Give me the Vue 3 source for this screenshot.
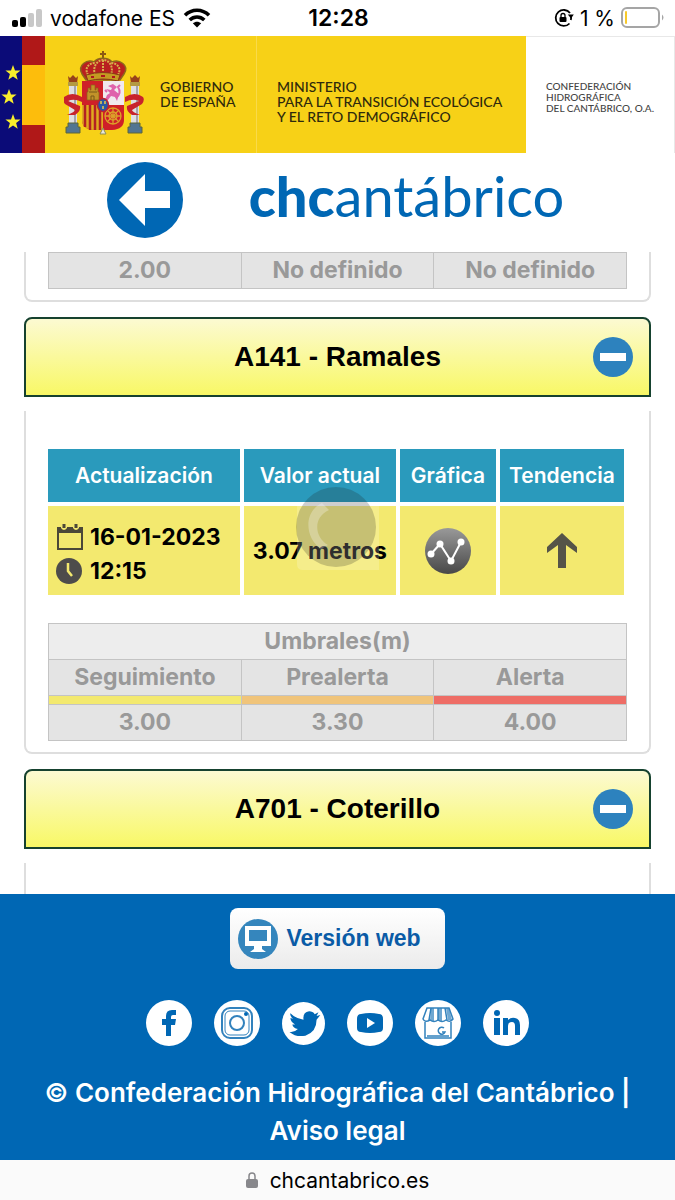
<template>
  <div class="page">
    <div class="status-bar">
      <div class="carrier">
        <svg class="signal" width="30" height="20" viewBox="0 0 30 20">
          <rect x="0" y="12" width="6" height="7" rx="2" fill="#000" />
          <rect x="8" y="9" width="6" height="10" rx="2" fill="#000" />
          <rect x="16" y="5" width="6" height="14" rx="2" fill="#c8c8c8" />
          <rect x="24" y="1" width="6" height="18" rx="2" fill="#c8c8c8" />
        </svg>
        <span>vodafone ES</span>
        <svg width="28" height="20" viewBox="0 0 28 20" fill="none" stroke="#000" stroke-width="3.6">
          <path d="M2 7.2C8.800 .5 19.200 .5 26 7.200" />
          <path d="M6.700 12C11 8 17 8 21.300 12" />
          <path d="M14 19.500L9.800 15.300C12.300 13.200 15.700 13.200 18.200 15.300Z" fill="#000" stroke="none" />
        </svg>
      </div>
      <span class="time">12:28</span>
      <div class="battery">
        <svg width="20" height="20" viewBox="0 0 20 20" fill="none" stroke="#000" stroke-width="1.8">
          <path d="M16 5A8 8 0 1 0 15.500 15.500" />
          <path d="M17 8.500A8 8 0 0 1 16.800 12" />
          <path d="M13.800 6.500h6l-2.800 4z" fill="#000" stroke="none" />
          <rect x="5.500" y="9" width="7" height="5" rx="1" fill="#000" stroke="none" />
          <path d="M7 9V7.500a2 2 0 0 1 4 0V9" stroke-width="1.300" />
        </svg>
        <span>1 %</span>
        <svg width="44" height="22" viewBox="0 0 44 22">
          <rect x="1" y="1" width="37" height="19" rx="5" fill="#fff" stroke="#a5a5a5" stroke-width="2" />
          <rect x="4" y="4" width="2" height="13" rx="1" fill="#f7c92b" />
          <path d="M41 7.500q3 3 0 6z" fill="#a5a5a5" />
        </svg>
      </div>
    </div>

    <div class="gov-banner">
      <svg class="flags" width="45" height="117" viewBox="0 0 45 117">
        <rect width="23" height="117" fill="#0b0b78" />
        <rect x="22" width="23" height="117" fill="#b01818" />
        <rect x="22" y="29" width="23" height="60" fill="#fdbd0c" />
        <g fill="#f8ee2c">
          <path v-for="s in stars" :key="s.y" :transform="`translate(${s.x} ${s.y})`"
            d="M0-8L2-2.500H7.600L3.100 1 4.700 6.800 0 3.400-4.700 6.800-3.100 1-7.600-2.500H-2Z" />
        </g>
      </svg>
      <div class="gov-state">
        <svg width="80" height="86" viewBox="0 0 80 86">
          <!-- corona -->
          <path d="M39 1v9M36 4h6" stroke="#8c5a12" stroke-width="2" />
          <path d="M18 24C13 15 23 9 30 12 34 7 44 7 48 12 55 9 66 15 60 24L56 30H22Z" fill="#b92020" stroke="#8c681b" stroke-width="1.500" />
          <path d="M24 25C20 18 25 13 31 13M31 25C28 16 34 10 39 10 45 10 50 16 47 25M54 25C58 18 53 13 47 13M39 10V26" fill="none" stroke="#d6b04a" stroke-width="2" stroke-dasharray="2 1" />
          <path d="M22 25q17-5 34 0l-2 6q-15-4-30 0z" fill="#c49a22" stroke="#8a3a16" />
          <path d="M27 27h3M37 26h4M48 27h3" stroke="#b1151d" stroke-width="2" />
          <!-- columnas -->
          <g v-for="x in [2, 64]" :key="x" :transform="`translate(${x} 0)`">
            <path d="M2 26l2 2 3-3 3 3 2-2-1 7H3z" fill="#97421b" />
            <rect x="2" y="32" width="10" height="4" fill="#b49a42" />
            <rect x="3" y="36" width="8" height="38" fill="#dfdfe2" />
            <path d="M9 36v38" stroke="#a3a3ac" stroke-width="2" />
            <path d="M2 73h10v4h2v6H0v-6h2z" fill="#527592" stroke="#5c663b" />
          </g>
          <path d="M0 47q8-6 18 0v5q-8-4-14-1l12 5q1 5-5 9H3q8-3 8-5L1 54q-3-4-1-7z" fill="#c8232c" />
          <path d="M79 47q-8-6-18 0v5q8-4 14-1l-12 5q-1 5 5 9h8q-8-3-8-5l10-6q3-4 1-7z" fill="#c8232c" />
          <!-- escudo -->
          <path d="M18 31h42v39q0 9-12 10H30q-12-1-12-10z" fill="#cf2028" />
          <path d="M39 31h21v24H39z" fill="#f0e9ee" />
          <path d="M18 55h21v25h-9q-12-1-12-10z" fill="#e0a920" />
          <path d="M21 55v22M26 55v25M31 55v25M36 55v25" stroke="#b42123" stroke-width="2.500" />
          <path d="M23 50V42h1v-4h2v2h1v-5h4v5h1v-2h2v4h1v8z" fill="#c29329" stroke="#8e631a" stroke-width=".7" />
          <path d="M27 50v-4h3v4M25 42h8" stroke="#795918" fill="none" />
          <path d="M44 36l5-2 4 3-3 3 5 4-2 7-2-4-4-1-3 4h-3l2-5 3-2-4-4 5 1 1-2z" fill="#df62ac" />
          <path d="M52 48q6-5 2-11l2-2M43 42l-2-2" fill="none" stroke="#df62ac" stroke-width="2" />
          <g fill="none" stroke="#dca129" stroke-width="1.300">
            <circle cx="49" cy="66" r="8" />
            <circle cx="49" cy="66" r="4" />
            <path d="M41 66h16M49 58v16M43 60l12 12M55 60L43 72" />
          </g>
          <ellipse cx="39" cy="55" rx="5.500" ry="6.500" fill="#2859a5" stroke="#bd2233" stroke-width="1.500" />
          <path d="M37 51v3M41 51v3M39 56v3" stroke="#b9ad61" stroke-width="2" />
          <path d="M36 84l3-6 3 6z" fill="#e8e8df" stroke="#8b8d57" />
        </svg>
        <p>GOBIERNO<br>DE ESPAÑA</p>
      </div>
      <div class="gov-ministry">
        <p>MINISTERIO<br>PARA LA TRANSICIÓN ECOLÓGICA<br>Y EL RETO DEMOGRÁFICO</p>
      </div>
      <div class="gov-body">
        <p>CONFEDERACIÓN<br>HIDROGRÁFICA<br>DEL CANTÁBRICO, O.A.</p>
      </div>
    </div>

    <header class="header">
      <a href="#" class="back" aria-label="Volver">
        <svg width="76" height="76" viewBox="0 0 76 76">
          <circle cx="38" cy="38" r="38" fill="#0067b4" />
          <path d="M12 38L38 12V29H63V46H38V64Z" fill="#fff" />
        </svg>
      </a>
      <a href="#" class="brand"><b>chc</b>antábrico</a>
    </header>

    <main class="stations">
      <div class="panel panel-first">
        <table class="thresholds">
          <tbody>
            <tr>
              <td>2.00</td>
              <td>No definido</td>
              <td>No definido</td>
            </tr>
          </tbody>
        </table>
      </div>

      <h3 class="station-title">
        <button type="button" @click="toggle('A141')">
          <span>A141 - Ramales</span>
          <svg width="40" height="40" viewBox="0 0 40 40">
            <circle cx="20" cy="20" r="20" fill="#2d82be" />
            <path d="M7 16H33V24H7Z" fill="#fff" />
          </svg>
        </button>
      </h3>
      <div v-show="open.A141" class="panel">
        <table class="readings">
          <thead>
            <tr>
              <th class="col-date">Actualización</th>
              <th class="col-value">Valor actual</th>
              <th class="col-chart">Gráfica</th>
              <th class="col-trend">Tendencia</th>
            </tr>
          </thead>
          <tbody>
            <tr>
              <td class="date">
                <div class="stamp">
                  <svg width="28" height="28" viewBox="0 0 28 28">
                    <path d="M2 5H26V26H2Z" fill="none" stroke="#4b4838" stroke-width="2" />
                    <path d="M1 4H27V10H1Z" fill="#4b4838" />
                    <path d="M5 1h6v4q-3 4-6 0zM17 1h6v4q-3 4-6 0z" fill="#f3e96f" />
                    <path d="M8 1v4M20 1v4" stroke="#4b4838" stroke-width="3" />
                  </svg>
                  <span>16-01-2023</span>
                </div>
                <div class="stamp">
                  <svg width="28" height="28" viewBox="0 0 28 28">
                    <circle cx="13" cy="14" r="13" fill="#4d4c4b" />
                    <path d="M12 6V14L16 19" fill="none" stroke="#f3e96f" stroke-width="2.500" />
                  </svg>
                  <span>12:15</span>
                </div>
              </td>
              <td class="value">3.07 metros</td>
              <td class="icon-cell">
                <a href="#" aria-label="Ver gráfica">
                  <svg width="48" height="48" viewBox="0 0 48 48">
                    <defs>
                      <linearGradient id="ball" x1="0" y1="0" x2="0" y2="1">
                        <stop offset="0" stop-color="#999" />
                        <stop offset="1" stop-color="#484848" />
                      </linearGradient>
                    </defs>
                    <circle cx="24" cy="24" r="23" fill="url(#ball)" />
                    <path d="M7 27L16 17 27 34 37 15" fill="none" stroke="#fff" stroke-width="2" />
                    <g fill="#fff">
                      <circle cx="7" cy="27" r="3.500" />
                      <circle cx="16" cy="17" r="3.500" />
                      <circle cx="27" cy="34" r="3.500" />
                      <circle cx="37" cy="15" r="3.500" />
                    </g>
                  </svg>
                </a>
              </td>
              <td class="icon-cell">
                <svg width="32" height="38" viewBox="0 0 32 38">
                  <path d="M16 1L31 15V21L20 13V36H12V13L1 21V15Z" fill="#555448" />
                </svg>
              </td>
            </tr>
          </tbody>
        </table>

        <table class="thresholds">
          <thead>
            <tr>
              <th colspan="3" class="caption">Umbrales(m)</th>
            </tr>
            <tr>
              <th>Seguimiento</th>
              <th>Prealerta</th>
              <th>Alerta</th>
            </tr>
          </thead>
          <tbody>
            <tr class="levels">
              <td class="yellow"></td>
              <td class="orange"></td>
              <td class="red"></td>
            </tr>
            <tr>
              <td>3.00</td>
              <td>3.30</td>
              <td>4.00</td>
            </tr>
          </tbody>
        </table>
      </div>

      <h3 class="station-title">
        <button type="button" @click="toggle('A701')">
          <span>A701 - Coterillo</span>
          <svg width="40" height="40" viewBox="0 0 40 40">
            <circle cx="20" cy="20" r="20" fill="#2d82be" />
            <path d="M7 16H33V24H7Z" fill="#fff" />
          </svg>
        </button>
      </h3>
      <div v-show="open.A701" class="panel panel-last"></div>

      <!-- cargando -->
      <svg class="loader" width="84" height="84" viewBox="0 0 84 84">
        <path d="M1 16H83V84H7Q1 84 1 78Z" fill="#fff" opacity=".2" />
        <circle cx="40" cy="41" r="40" fill="#222" opacity=".22" />
        <path d="M26 17C8 25 8 51 25 63L32 59C18 51 17 31 33 24Z" fill="#fff" opacity=".28" />
      </svg>
    </main>

    <footer class="footer">
      <a href="#" class="web-version">
        <svg width="40" height="40" viewBox="0 0 40 40">
          <circle cx="20" cy="20" r="20" fill="#3586bd" />
          <path d="M7 7H33V27H24V30L28 33H12L16 30V27H7Z" fill="#fff" />
          <path d="M11 11H29V22H11Z" fill="#3586bd" />
        </svg>
        <span>Versión web</span>
      </a>

      <nav class="social">
        <a href="#" aria-label="Facebook">
          <svg viewBox="0 0 46 46">
            <circle cx="23" cy="23" r="23" fill="#fff" />
            <path d="M20 36V25H16V19H20V16Q20 10 26 10H30V15H27Q25 15 25 17V19H30L29 25H25V36Z" fill="#0067b4" />
          </svg>
        </a>
        <a href="#" aria-label="Instagram">
          <svg viewBox="0 0 46 46">
            <circle cx="23" cy="23" r="23" fill="#fff" />
            <g fill="none" stroke="#3282bd" stroke-width="2">
              <rect x="8" y="8" width="30" height="30" rx="8" />
              <rect x="11" y="11" width="24" height="24" rx="5" stroke-width="1" />
              <circle cx="23" cy="23" r="7" />
            </g>
            <circle cx="32" cy="14" r="2" fill="#0067b4" />
          </svg>
        </a>
        <a href="#" aria-label="Twitter" class="small">
          <svg viewBox="0 0 46 46">
            <circle cx="23" cy="23" r="23" fill="#fff" />
            <path d="M9 12Q15 18 23 19Q22 11 29 10Q33 10 35 13L39 11L37 15L41 14L37 19Q37 32 25 36Q15 38 8 32Q13 33 17 29Q12 28 11 24H14Q9 21 9 17L12 18Q8 15 9 12Z" fill="#0067b4" />
          </svg>
        </a>
        <a href="#" aria-label="YouTube">
          <svg viewBox="0 0 46 46">
            <circle cx="23" cy="23" r="23" fill="#fff" />
            <path d="M14 14Q23 12 32 14 36 14 36 19V28Q36 32 32 32 23 34 14 32 10 32 10 28V19Q10 14 14 14Z" fill="#0067b4" />
            <path d="M20 18L28 23 20 28Z" fill="#fff" />
          </svg>
        </a>
        <a href="#" aria-label="Google My Business">
          <svg viewBox="0 0 46 46">
            <circle cx="23" cy="23" r="23" fill="#fff" />
            <g fill="none" stroke="#3282bd" stroke-width="1.500">
              <path d="M12 8H34L38 19Q35 23 31 20 27 23 23 20 19 23 15 20 10 23 8 19Z" />
              <path d="M16 8L14 20M23 8V20M30 8L32 20M10 22V38H36V22M12 36H34" />
              <path d="M29 28a3.500 3.500 0 1 0 1 4h-3" />
            </g>
            <path d="M16 8H19V21H15ZM23 8H27V21H23ZM31 8H34L37 20H33Z" fill="#3282bd" opacity=".7" />
          </svg>
        </a>
        <a href="#" aria-label="LinkedIn">
          <svg viewBox="0 0 46 46">
            <circle cx="23" cy="23" r="23" fill="#fff" />
            <circle cx="14" cy="13" r="3" fill="#0067b4" />
            <path d="M11 18H17V35H11ZM20 18H25V20Q28 17 32 18 37 19 37 25V35H32V26Q32 22 29 22 25 22 25 26V35H20Z" fill="#0067b4" />
          </svg>
        </a>
      </nav>

      <p class="legal">© Confederación Hidrográfica del Cantábrico | <a href="#">Aviso legal</a></p>
    </footer>

    <div class="url-bar">
      <svg width="12" height="18" viewBox="0 0 12 18">
        <rect x="0" y="8" width="12" height="9" rx="2" fill="#87878b" />
        <path d="M3 9V5a3 3 0 0 1 6 0v4" fill="none" stroke="#87878b" stroke-width="1.500" />
      </svg>
      <span>chcantabrico.es</span>
    </div>
  </div>
</template>

<script setup>
import { reactive } from 'vue'

const stars = [
  { x: 13, y: 37 },
  { x: 9, y: 61 },
  { x: 13, y: 86 }
]

const open = reactive({ A141: true, A701: true })

const toggle = (id) => {
  open[id] = !open[id]
}
</script>

<style>
body {
  margin: 0;
  background: #fff;
}
</style>

<style scoped>
.page {
  display: flex;
  flex-direction: column;
  min-height: 100vh;
  font-family: Inter, "Liberation Sans", sans-serif;
  color: #000;
}

.page *, .page {
  box-sizing: border-box;
}

svg {
  display: block;
  flex: none;
}

p, h3 {
  margin: 0;
}

a {
  color: inherit;
  text-decoration: none;
}

/* barra de estado */
.status-bar {
  display: grid;
  grid-template-columns: 1fr auto 1fr;
  align-items: center;
  height: 36px;
  padding: 0 10px 0 12px;
  font-size: 21px;
}

.carrier, .battery {
  display: flex;
  align-items: center;
  gap: 8px;
}

.battery {
  justify-content: flex-end;
  gap: 6px;
}

.time {
  font-size: 23px;
  font-weight: 600;
}

/* banda institucional */
.gov-banner {
  display: grid;
  grid-template-columns: 45px 212fr 269fr 149fr;
  height: 117px;
  font-family: Lato, sans-serif;
  font-size: 14px;
  font-weight: 500;
  line-height: 15px;
  color: #2f2a0c;
  white-space: nowrap;
}

.gov-state, .gov-ministry {
  display: flex;
  align-items: flex-start;
  background: #f7d117;
}

.gov-state {
  gap: 16px;
  padding: 14px 0 0 19px;
  border-right: 1px solid #f9da4a;
}

.gov-state p {
  padding-top: 29px;
}

.gov-ministry {
  padding: 43px 0 0 20px;
}

.gov-body {
  padding: 44px 0 0 20px;
  border: 1px solid #e8e8e8;
  border-width: 1px 1px 0 0;
  font-size: 10px;
  line-height: 11px;
  color: #444;
}

.header {
  display: flex;
  align-items: center;
  justify-content: center;
  gap: 66px;
  height: 99px;
  padding: 0 4px 6px 0;
}

.brand {
  padding-bottom: 8px;
  font-family: Lato, sans-serif;
  font-size: 56px;
  line-height: 60px;
  color: #0067b4;
}

.brand b {
  font-weight: 900;
}

/* estaciones */
.stations {
  position: relative;
  flex: 1;
  display: flex;
  flex-direction: column;
  padding: 0 24px;
}

.panel {
  margin: 14px 0 15px;
  padding: 34px 22px 11px;
  border: 2px solid #dedede;
  border-top: 0;
  border-radius: 0 0 8px 8px;
}

.panel-first {
  margin-top: 0;
  padding-top: 0;
}

.panel-last {
  flex: 1;
  margin-bottom: 0;
  padding: 0;
  border-bottom: 0;
  border-radius: 0;
}

.station-title button {
  display: flex;
  align-items: center;
  width: 100%;
  height: 80px;
  padding: 0 16px 0 56px;
  border: 2px solid #16422f;
  border-radius: 8px 8px 0 0;
  background: linear-gradient(#fcfad2, #f8f866);
  font-family: "Liberation Sans", Arial, sans-serif;
  font-size: 28px;
  font-weight: bold;
  color: #000;
  cursor: pointer;
}

.station-title span {
  flex: 1;
  text-align: center;
}

.readings {
  width: calc(100% + 5px);
  margin-left: -4px;
  border-collapse: separate;
  border-spacing: 4px;
  table-layout: fixed;
}

.readings th {
  height: 53px;
  padding: 0;
  background: #2a9abc;
  color: #fff;
  font-size: 21px;
  font-weight: 600;
}

.col-date { width: 34%; }
.col-value { width: 27%; }
.col-chart { width: 17%; }

.readings td {
  height: 89px;
  padding: 0 8px;
  background: #f3e96f;
  font-size: 23px;
  font-weight: 700;
  white-space: nowrap;
}

.readings .date {
  padding-top: 6px;
}

.readings .value {
  padding: 0;
  text-align: center;
}

.stamp {
  display: flex;
  align-items: center;
  gap: 6px;
  height: 34px;
}

.icon-cell svg {
  margin: 0 auto;
}

.thresholds {
  width: 100%;
  border-collapse: collapse;
  table-layout: fixed;
  color: #999;
  font-size: 23px;
  line-height: 27px;
}

.readings + .thresholds {
  margin-top: 24px;
}

.thresholds th, .thresholds td {
  height: 36px;
  padding: 0;
  border: 1px solid #c4c4c4;
  background: #e4e4e4;
  font-weight: 700;
  text-align: center;
}

.thresholds .caption {
  background: #ededed;
}

.thresholds .levels td {
  height: 9px;
}

.thresholds .yellow { background: #f3e96f; }
.thresholds .orange { background: #f0c47a; }
.thresholds .red { background: #ee6d66; }

.loader {
  position: absolute;
  top: 234px;
  left: 50%;
  margin-left: -42px;
}

/* pie */
.footer {
  display: flex;
  flex-direction: column;
  align-items: center;
  padding: 14px 24px 10px;
  background: #0067b4;
  color: #fff;
}

.web-version {
  display: flex;
  align-items: center;
  gap: 8px;
  height: 61px;
  padding: 0 24px 0 8px;
  border-radius: 8px;
  background: linear-gradient(#fff, #ebebeb);
  font-family: "Liberation Sans", Arial, sans-serif;
  font-size: 23px;
  font-weight: bold;
  color: #0a5ba6;
}

.social {
  display: flex;
  align-items: center;
  gap: 22px;
  margin: 31px 0 28px;
}

.social svg {
  width: 46px;
  height: 46px;
}

.social .small svg {
  width: 43px;
  height: 43px;
}

.legal {
  font-size: 26px;
  font-weight: 600;
  line-height: 38px;
  text-align: center;
}

.url-bar {
  display: flex;
  align-items: center;
  justify-content: center;
  gap: 12px;
  height: 40px;
  background: #fafafa;
  font-size: 21px;
}
</style>
